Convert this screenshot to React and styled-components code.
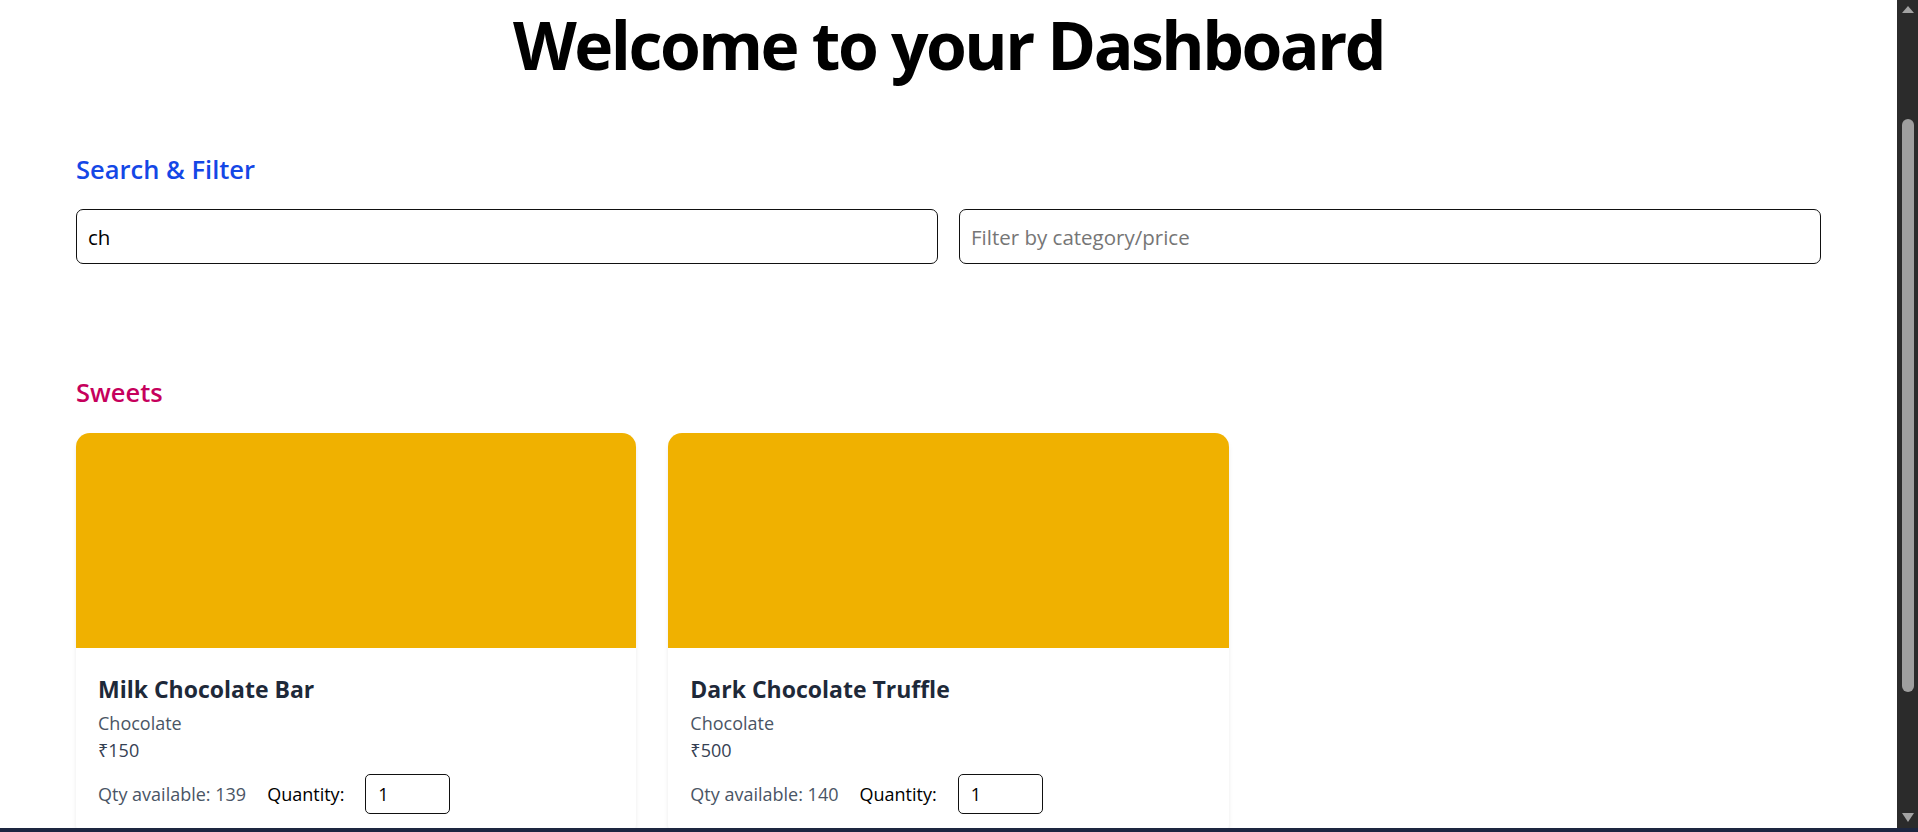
import React, { useState } from "react";
import styled, { createGlobalStyle } from "styled-components";

const GlobalStyle = createGlobalStyle`
  html, body {
    margin: 0;
    padding: 0;
    background: #ffffff;
    scrollbar-width: none;
  }
  body {
    font-family: "Open Sans", "Noto Sans", sans-serif;
    color: #000000;
    overflow-x: hidden;
  }
  body::-webkit-scrollbar {
    display: none;
  }
  * {
    box-sizing: border-box;
  }
`;

const sweets = [
  { id: 1, name: "Milk Chocolate Bar", category: "Chocolate", price: 150, stock: 139 },
  { id: 2, name: "Dark Chocolate Truffle", category: "Chocolate", price: 500, stock: 140 },
];

export default function App() {
  const [search, setSearch] = useState("ch");
  const [filter, setFilter] = useState("");
  const [qty, setQty] = useState({ 1: 1, 2: 1 });

  return (
    <>
      <GlobalStyle />
      <Page>
        <Title>Welcome to your Dashboard</Title>

        <Section>
          <SectionTitle tone="#1447e6">Search &amp; Filter</SectionTitle>
          <FilterRow>
            <SearchInput value={search} onChange={(e) => setSearch(e.target.value)} />
            <SearchInput
              placeholder="Filter by category/price"
              value={filter}
              onChange={(e) => setFilter(e.target.value)}
            />
          </FilterRow>
        </Section>

        <SweetsSection>
          <SectionTitle tone="#c6005c">Sweets</SectionTitle>
          <CardGrid>
            {sweets.map((s) => (
              <Card key={s.id}>
                <CardImage />
                <CardBody>
                  <CardTitle>{s.name}</CardTitle>
                  <Category>{s.category}</Category>
                  <Price>₹{s.price}</Price>
                  <QtyRow>
                    <Stock>Qty available: {s.stock}</Stock>
                    <QtyLabel>Quantity:</QtyLabel>
                    <QtyInput
                      type="text"
                      value={qty[s.id]}
                      onChange={(e) => setQty({ ...qty, [s.id]: e.target.value })}
                    />
                  </QtyRow>
                </CardBody>
              </Card>
            ))}
          </CardGrid>
        </SweetsSection>
      </Page>

      <ScrollRail>
        <ArrowUp />
        <Thumb />
        <ArrowDown />
      </ScrollRail>
      <TaskStrip />
    </>
  );
}

const Page = styled.main`
  width: calc(100% - 21px);
  padding: 0 76px 40px;
`;

const Title = styled.h1`
  margin: 11px 0 0;
  text-align: center;
  font-size: 66px;
  line-height: 66px;
  font-weight: 700;
  letter-spacing: -2.5px;
  color: #000000;
`;

const Section = styled.section`
  margin-top: 79px;
`;

const SweetsSection = styled.section`
  margin-top: 115px;
`;

const SectionTitle = styled.h2`
  margin: 0;
  font-size: 25.5px;
  line-height: 26px;
  font-weight: 600;
  color: ${({ tone }) => tone};
`;

const FilterRow = styled.div`
  margin-top: 27px;
  display: grid;
  grid-template-columns: 1fr 1fr;
  gap: 21px;
`;

const SearchInput = styled.input`
  height: 55px;
  width: 100%;
  padding: 0 11px;
  border: 1px solid #111111;
  border-radius: 7px;
  font-family: "Open Sans", "Noto Sans", sans-serif;
  font-size: 20.5px;
  color: #000000;
  background: #ffffff;
  outline: none;

  &::placeholder {
    color: #767676;
  }
`;

const CardGrid = styled.div`
  margin-top: 28px;
  display: grid;
  grid-template-columns: repeat(3, 1fr);
  gap: 32px;
`;

const Card = styled.article`
  background: #ffffff;
  border-radius: 14px;
  overflow: hidden;
  box-shadow: 0 4px 6px -1px rgba(0, 0, 0, 0.08), 0 2px 4px -2px rgba(0, 0, 0, 0.08);
`;

const CardImage = styled.div`
  height: 215px;
  background: #f0b100;
`;

const CardBody = styled.div`
  padding: 26px 22px 24px;
`;

const CardTitle = styled.h3`
  margin: 0 0 6px;
  font-size: 23px;
  line-height: 30px;
  font-weight: 700;
  color: #1e2939;
`;

const Category = styled.p`
  margin: 0;
  font-size: 18px;
  line-height: 27px;
  color: #4a5565;
`;

const Price = styled.p`
  margin: 0;
  font-size: 18px;
  line-height: 27px;
  color: #364153;
`;

const QtyRow = styled.div`
  margin-top: 10px;
  display: flex;
  align-items: center;
  gap: 21px;
  font-size: 18px;
  line-height: 27px;
`;

const Stock = styled.span`
  color: #4a5565;
`;

const QtyLabel = styled.label`
  color: #000000;
`;

const QtyInput = styled.input`
  width: 85px;
  height: 40px;
  padding: 0 12px;
  border: 1px solid #111111;
  border-radius: 5px;
  font-family: "Open Sans", "Noto Sans", sans-serif;
  font-size: 18px;
  color: #000000;
  outline: none;
`;

const ScrollRail = styled.div`
  position: fixed;
  top: 0;
  right: 0;
  width: 21px;
  height: calc(100% - 4px);
  background: #2b2b2b;
`;

const Thumb = styled.div`
  position: absolute;
  top: 119px;
  left: 5px;
  width: 12px;
  height: 573px;
  border-radius: 6px;
  background: #9f9f9f;
`;

const ArrowUp = styled.div`
  position: absolute;
  top: 6px;
  left: 5px;
  width: 0;
  height: 0;
  border-left: 6px solid transparent;
  border-right: 6px solid transparent;
  border-bottom: 7px solid #a3a3a3;
`;

const ArrowDown = styled.div`
  position: absolute;
  bottom: 6px;
  left: 5px;
  width: 0;
  height: 0;
  border-left: 6px solid transparent;
  border-right: 6px solid transparent;
  border-top: 9px solid #a3a3a3;
`;

const TaskStrip = styled.div`
  position: fixed;
  left: 0;
  right: 0;
  bottom: 0;
  height: 4px;
  background: #1d2640;
`;
